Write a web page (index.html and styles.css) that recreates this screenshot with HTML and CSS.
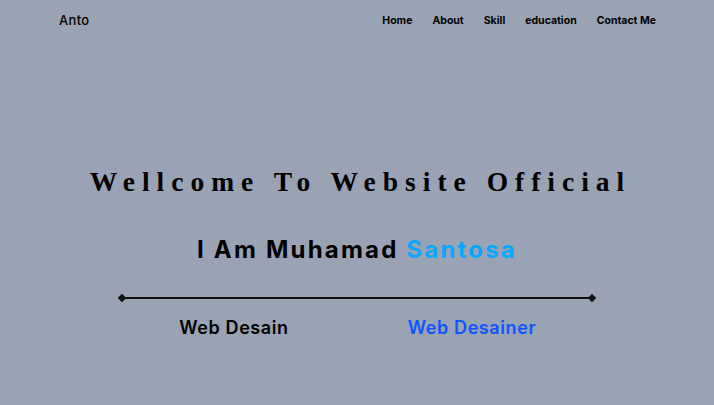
FILE: index.html
```html
<!DOCTYPE html>
<html>
<head>
<meta charset="utf-8">
<link rel="stylesheet" href="styles.css">
</head>
<body>
<header class="nav">
  <div class="logo">Anto</div>
  <nav class="links">
    <a href="#">Home</a>
    <a href="#">About</a>
    <a href="#">Skill</a>
    <a href="#">education</a>
    <a href="#">Contact Me</a>
  </nav>
</header>
<main class="hero">
  <h1 class="title">Wellcome To Website Official</h1>
  <h2 class="name">I Am Muhamad <span class="accent">Santosa</span></h2>
  <div class="divider"><span class="dot"></span><span class="bar"></span><span class="dot"></span></div>
  <div class="roles">
    <div class="role">Web Desain</div>
    <div class="role blue">Web Desainer</div>
  </div>
</main>
</body>
</html>
```

FILE: styles.css
```css
* { box-sizing: border-box; margin: 0; padding: 0; }
html, body { height: 100%; }
body {
  background: #9aa3b3;
  font-family: Inter, "Noto Sans", sans-serif;
  color: #000;
}
.nav {
  display: flex;
  justify-content: space-between;
  align-items: center;
  height: 40px;
  padding: 0 58px 0 59px;
}
.logo { font-size: 13px; font-weight: 500; letter-spacing: 0.3px; }
.links { display: flex; gap: 20px; }
.links a {
  color: #000;
  text-decoration: none;
  font-size: 10.5px;
  font-weight: 700;
}
.hero {
  display: flex;
  flex-direction: column;
  align-items: center;
  padding-top: 127px;
}
.title {
  font-family: "Liberation Serif", serif;
  font-size: 27.5px;
  font-weight: 700;
  letter-spacing: 7px;
  line-height: 30px;
  margin-left: 7px;
}
.name {
  margin-top: 38px;
  font-size: 24px;
  font-weight: 700;
  letter-spacing: 2.2px;
  line-height: 30px;
}
.accent { color: #0aa6ff; }
.divider {
  margin-top: 30px;
  width: 474px;
  display: flex;
  align-items: center;
}
.bar { flex: 1; height: 2px; background: #111; }
.dot {
  width: 6px; height: 6px; background: #111;
  transform: rotate(45deg);
  margin: 0 -1px;
}
.roles {
  width: 476px;
  margin-right: 8px;
  display: grid;
  grid-template-columns: 1fr 1fr;
  margin-top: 14px;
}
.role {
  text-align: center;
  font-size: 18px;
  font-weight: 600;
  letter-spacing: 0.6px;
  line-height: 26px;
}
.role.blue { color: #0f55ff; }
```
